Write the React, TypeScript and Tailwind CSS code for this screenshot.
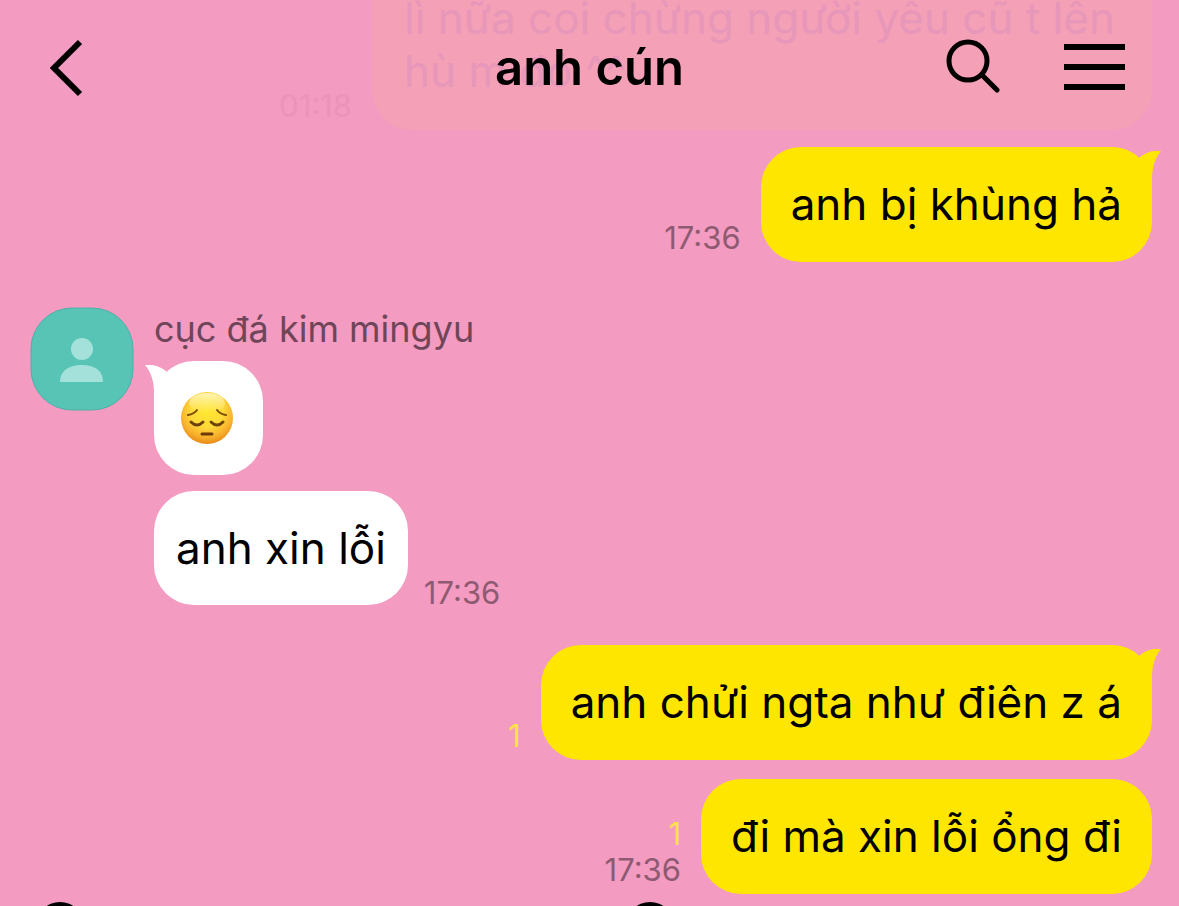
import React from 'react';

type Message = {
  text: string;
  time?: string;
  unread?: number;
  tail?: boolean;
};

const firstReply: Message[] = [{ text: 'anh bị khùng hả', time: '17:36', tail: true }];

const lastReplies: Message[] = [
  { text: 'anh chửi ngta như điên z á', unread: 1, tail: true },
  { text: 'đi mà xin lỗi ổng đi', time: '17:36', unread: 1 },
];

const Tail: React.FC<{ side: 'left' | 'right' }> = ({ side }) => (
  <svg
    viewBox="0 0 28 40"
    fill="currentColor"
    aria-hidden="true"
    className={
      side === 'right'
        ? 'absolute top-1 -right-[9px] w-7 h-10 text-[#ffe600]'
        : 'absolute top-1 -left-[9px] w-7 h-10 text-white -scale-x-100'
    }
  >
    <path d="M7 6C12 2 19 -1 28 0C22 7 19 16 19 28L19 40L0 20Z" />
  </svg>
);

const SentMessage: React.FC<{ message: Message }> = ({ message }) => (
  <li className="flex items-end justify-end gap-5">
    <div className="flex flex-col items-end pb-1.5 text-[31px] leading-9">
      {message.unread && <span className="text-[#ffe14a]">{message.unread}</span>}
      {message.time && <time className="text-[#8e5a71]">{message.time}</time>}
    </div>
    <div className="relative rounded-[40px] bg-[#ffe600] px-[30px] py-[30px]">
      {message.tail && <Tail side="right" />}
      <p className="relative text-[44px] leading-[55px]">{message.text}</p>
    </div>
  </li>
);

const Avatar: React.FC = () => (
  <svg viewBox="0 0 104 104" className="w-[104px] h-[104px] shrink-0" aria-hidden="true">
    <rect x="1" y="1" width="102" height="102" rx="41" fill="#57c4b6" stroke="#4eb0a7" strokeWidth="1" />
    <circle cx="52" cy="42" r="11" fill="#a4e1da" />
    <path d="M30 75C30 63 40 58 52 58S73 63 73 75Z" fill="#a4e1da" />
  </svg>
);

const PensiveFace: React.FC = () => (
  <svg viewBox="0 0 52 52" className="w-[52px] h-[52px]" role="img" aria-label="pensive face">
    <defs>
      <radialGradient id="face" cx="50%" cy="36%" r="64%">
        <stop offset="0" stopColor="#ffe92e" />
        <stop offset="0.5" stopColor="#ffd93a" />
        <stop offset="0.8" stopColor="#f8b02c" />
        <stop offset="1" stopColor="#e88a17" />
      </radialGradient>
      <linearGradient id="shine" x1="0" y1="0" x2="0" y2="1">
        <stop offset="0" stopColor="#fff9c0" stopOpacity="0.9" />
        <stop offset="1" stopColor="#fff9c0" stopOpacity="0" />
      </linearGradient>
    </defs>
    <circle cx="26" cy="26" r="26" fill="url(#face)" />
    <ellipse cx="26" cy="11" rx="18" ry="10" fill="url(#shine)" />
    <g fill="none" strokeLinecap="round">
      <path d="M7 23Q13 22 16 18M36 18Q39 22 45 23" stroke="#7a4d08" strokeWidth="2" />
      <path d="M10 30Q16 36 22 30M30 30Q36 36 42 30" stroke="#6b430b" strokeWidth="3" />
      <path d="M21 42H31" stroke="#6b3a08" strokeWidth="3" />
    </g>
  </svg>
);

const Header: React.FC = () => (
  <header className="absolute inset-x-0 top-0 z-10 grid grid-cols-3 items-center px-12 pt-9">
    <button aria-label="Back" className="justify-self-start">
      <svg viewBox="0 0 36 64" className="w-9 h-16" fill="none" stroke="currentColor" strokeWidth="6">
        <path d="M32 6L6 32L32 58" />
      </svg>
    </button>
    <h1 className="text-center text-[49px] leading-[54px] font-semibold">anh cún</h1>
    <div className="flex items-center justify-end gap-16 pr-[5px]">
      <button aria-label="Search">
        <svg viewBox="0 0 54 64" className="w-[54px] h-16" fill="none" stroke="currentColor" strokeWidth="5">
          <circle cx="22" cy="25" r="19" />
          <path d="M36 39L51 54" strokeLinecap="round" />
        </svg>
      </button>
      <button aria-label="Menu">
        <svg viewBox="0 0 62 64" className="w-[62px] h-16" stroke="currentColor" strokeWidth="6">
          <path d="M0 11H61M0 31H61M0 51H61" />
        </svg>
      </button>
    </div>
  </header>
);

const App: React.FC = () => {
  return (
    <div className="relative min-h-screen overflow-hidden bg-[#f39bc1] text-black font-[Inter,sans-serif]">
      <Header />

      <main className="pl-[30px] pr-[27px]">
        {/* Older message fading out behind the header */}
        <div className="flex h-[130px] items-end justify-end gap-5 overflow-hidden">
          <time className="pb-1.5 text-[31px] leading-9 text-[#ec93ba]">01:18</time>
          <div className="w-[780px] rounded-[40px] bg-[#f4a0b6] px-8 pt-[30px] pb-8">
            <p className="text-[44px] leading-[53px] text-[#e797b9]">
              lì nữa coi chừng người yêu cũ t lên hù m đó ^^
            </p>
          </div>
        </div>

        <ul className="mt-[17px]">
          {firstReply.map((m) => (
            <SentMessage key={m.text} message={m} />
          ))}
        </ul>

        <section className="mt-[45px] flex items-start gap-5">
          <Avatar />
          <div>
            <h2 className="text-[36px] leading-[44px] text-[#6f4559]">cục đá kim mingyu</h2>
            <div className="relative mt-[10px] flex h-[114px] w-[109px] items-center justify-center rounded-[40px] bg-white pr-1">
              <Tail side="left" />
              <PensiveFace />
            </div>
            <div className="mt-4 flex items-end gap-4">
              <p className="rounded-[40px] bg-white px-[22px] py-[30px] text-[44px] leading-[54px]">anh xin lỗi</p>
              <time className="text-[31px] leading-6 text-[#8e5a71]">17:36</time>
            </div>
          </div>
        </section>

        <ul className="mt-10 flex flex-col gap-[19px]">
          {lastReplies.map((m) => (
            <SentMessage key={m.text} message={m} />
          ))}
        </ul>
      </main>

      {/* Top edge of the input bar icons */}
      <footer className="mt-2 grid grid-cols-2 h-1 overflow-hidden">
        <span className="ml-9 size-12 rounded-full bg-black" />
        <span className="ml-9 size-12 rounded-full bg-black" />
      </footer>
    </div>
  );
};

export default App;
